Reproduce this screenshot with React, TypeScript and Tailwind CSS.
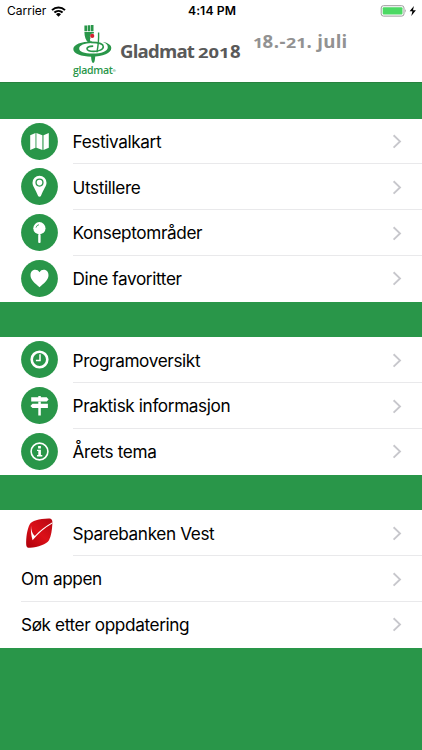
import type { ReactNode } from 'react';

type RowProps = {
  label: string;
  icon?: ReactNode;
  last?: boolean;
};

function Round({ children }: { children: ReactNode }) {
  return (
    <svg viewBox="0 0 37 37" className="h-[37px] w-[37px]" fill="#fff">
      <circle cx="18.5" cy="18.5" r="18.4" fill="#299649" />
      {children}
    </svg>
  );
}

const mapIcon = (
  <Round>
    <path d="M9.2 12.2 L14.5 10.1 V24.7 L9.2 27Z M15.4 10 L21.4 12.2 V26.9 L15.4 24.7Z M22.5 12.2 L27.8 10.1 V24.7 L22.5 27Z" />
  </Round>
);

const markerIcon = (
  <Round>
    <path
      fillRule="evenodd"
      d="M18.5 7.7a7 7 0 0 0-7 7c0 3.2 2.7 6 5.6 13.3.4 1 2.4 1 2.8 0 2.9-7.3 5.6-10.1 5.6-13.3a7 7 0 0 0-7-7Zm0 2.8a4.1 4.1 0 1 1 0 8.2 4.1 4.1 0 0 1 0-8.2Zm0 1.3a2.8 2.8 0 1 0 0 5.6 2.8 2.8 0 0 0 0-5.6Z"
    />
  </Round>
);

const pinIcon = (
  <Round>
    <circle cx="18.4" cy="14.2" r="6.1" />
    <rect x="17.2" y="20" width="2.4" height="9.1" rx="1" />
    <path d="M15 13.6a3.6 3.6 0 0 1 3-2.9" fill="none" stroke="#299649" strokeWidth="0.8" />
  </Round>
);

const heartIcon = (
  <Round>
    <path d="M18.5 27.3C14 23 9.5 20 9.5 15.2c0-6 6.8-7 9-2.9 2.2-4.1 9-3.1 9 2.9 0 4.8-4.5 7.8-9 12.1Z" />
  </Round>
);

const clockIcon = (
  <Round>
    <circle cx="18.5" cy="18.5" r="7.8" fill="none" stroke="#fff" strokeWidth="2.6" />
    <path d="M19 13.3v6.1h-4.1" fill="none" stroke="#fff" strokeWidth="1.5" />
  </Round>
);

const signIcon = (
  <Round>
    <path d="M17.3 8.9h2.5v1.4h5.9l1.9 2.1-1.9 2.2H10.2v-4.3h7.1Z" />
    <path d="M17.3 14.6h2.5v2.1h7.1v4.4h-7.1v7.4h-2.5v-7.4h-5.8l-2.1-2.2 2.1-2.2h5.8Z" />
  </Round>
);

const infoIcon = (
  <Round>
    <circle cx="18.5" cy="18.5" r="8.4" fill="none" stroke="#fff" strokeWidth="1.6" />
    <rect x="17.1" y="13" width="2.8" height="2.5" />
    <path d="M16 16.8h3.9v5.2h1.4v1.4H16V22h1.3v-3.9H16Z" />
  </Round>
);

const bankIcon = (
  <svg viewBox="0 0 37 37" className="h-[37px] w-[37px]">
    <defs>
      <linearGradient id="bank" x1="0.9" y1="0" x2="0.1" y2="1">
        <stop offset="0" stopColor="#b80812" />
        <stop offset="0.5" stopColor="#dc1018" />
        <stop offset="1" stopColor="#b0000b" />
      </linearGradient>
    </defs>
    <path
      d="M5.2 30.5C5 23.5 6 15.5 8.800 10.200C10.600 6.500 18 4.800 27.500 4.400C30.800 4.300 31.600 6 31.400 9.500C31 16 30.200 22 28 26.200C25.600 30.400 17 33 9 33.800C6.300 34 5.300 33 5.200 30.500Z"
      fill="url(#bank)"
    />
    <path
      d="M10 11.500C10.200 16 11 19.500 13.800 22C19 16.500 24.500 12 31.400 8.200L31.300 9.400C23.500 14 17 19.400 11.600 26.200C10.200 22 9.600 16.500 10 11.500Z"
      fill="#fff"
    />
  </svg>
);

function Chevron() {
  return (
    <svg viewBox="0 0 10 16" className="ml-auto mr-5 h-4 w-2.5" fill="none" stroke="#c7c7cc" strokeWidth="1.9">
      <path d="M1.6 2.2 8 8.4l-6.4 6.2" />
    </svg>
  );
}

function Row({ label, icon, last }: RowProps) {
  return (
    <li className="flex h-[45.8px] pl-[21px]">
      {icon && <div className="w-[51.6px] shrink-0 pt-[4px]">{icon}</div>}
      <div className={`flex flex-1 items-center ${last ? 'pb-px' : 'border-b border-[#e9e9eb]'}`}>
        <span className="whitespace-nowrap pt-[1.5px] text-[17.2px] tracking-[-0.38px]">{label}</span>
        <Chevron />
      </div>
    </li>
  );
}

function StatusBar() {
  return (
    <div className="flex h-[22px] items-center text-[12px]">
      <div className="flex flex-1 items-center gap-[5px] pl-[7px]">
        <span className="text-[12px]">Carrier</span>
        <svg viewBox="0 0 15 11" className="h-[11px] w-[15px]" fill="none" stroke="#000" strokeWidth="2">
          <path d="M1 4.1a9.4 9.4 0 0 1 13 0M3.4 6.6a6 6 0 0 1 8.2 0" />
          <path d="M7.5 10.7 5 8.3a3.6 3.6 0 0 1 5 0Z" fill="#000" stroke="none" />
        </svg>
      </div>
      <span className="text-[12.2px] font-semibold tracking-[0.1px]">4:14 PM</span>
      <div className="flex flex-1 items-center justify-end pr-[5px]">
        <svg viewBox="0 0 38 13" className="h-[13px] w-[38px]">
          <rect x="2.2" y="0.7" width="22.8" height="10.4" rx="2.3" fill="none" stroke="#9b9b9b" />
          <rect x="3.7" y="2.2" width="19.8" height="7.4" rx="1" fill="#4cd964" />
          <path d="M26.2 4.1q1.6 1.8 0 3.6Z" fill="#9b9b9b" />
          <path d="m34.9 1-4.3 5.3h2.8l-1.1 4.6 4.6-5.7h-2.9Z" fill="#000" />
        </svg>
      </div>
    </div>
  );
}

function Logo() {
  return (
    <div className="w-[42px] shrink-0 pt-[3px]">
      <svg viewBox="0 0 39 38" className="h-[38px] w-[39px]" fill="#299649">
        <path d="M11.4 .4h2.7v5.800h-2.700ZM14.700 .2h2.600v6h-2.600ZM17.900 0h2.600v6.200h-2.600Z" />
        <path d="M11.400 7h9.500v1.600a3 3 0 0 0-3.400 4.600c-1.400 1.700 0 3 1.500 4.600h-3.600c-2.600-2.500-4-6-4-10.800Z" />
        <circle cx="19.200" cy="10.900" r="2.100" fill="#d3202f" />
        <path d="M24.900 7.400h1.400c.2 7-.4 13.500-1.600 19.800h-1.500c1.400-6.600 1.900-13.200 1.700-19.800Z" />
        <path
          fillRule="evenodd"
          d="M19 16.600C8.300 16.600.3 19.600.3 24.100c0 4.700 7.900 7.600 18.300 7.600C29.800 31.700 38.300 28.300 38.300 23c0-3-3.300-5.100-8.500-5.900 3.600 1.200 5 2.900 5 5.100 0 4.100-6.600 6.400-15 6.400C11.100 28.600 6.200 26.800 6.200 23.600c0-3.200 5.100-5.400 12.800-5.500Z"
        />
        <path
          d="M18 17.400c8 0 12.300 1.500 12.300 4.300 0 2.900-4.600 4.700-9.600 4.700-3.800 0-6.700-.9-6.700-2.600 0-1.500 2.300-2.500 6.200-2.700"
          fill="none"
          stroke="#299649"
          strokeWidth="1.600"
        />
        <path d="M18.100 30.500h4.100c0 3.300-.4 5.900-1.300 7.200h-1.500c-.9-1.600-1.300-3.900-1.300-7.200Z" />
      </svg>
      <div className="whitespace-nowrap font-['Open_Sans',sans-serif] text-[10.5px] font-semibold leading-[14px] tracking-[-0.3px] text-[#299649]">
        gladmat<sup className="text-[4px]">®</sup>
      </div>
    </div>
  );
}

export default function App() {
  return (
    <div className="min-h-[750px] w-[422px] overflow-hidden bg-[#299649] font-[Inter,sans-serif] text-black">
      <header className="h-[83px] border-b border-[#27823f] bg-white">
        <StatusBar />
        <div className="flex items-start pl-[73px] font-['Open_Sans',sans-serif] font-bold">
          <Logo />
          <h1 className="ml-[5px] mt-[15px] flex w-[122px] items-baseline whitespace-nowrap text-[18.6px] leading-[28px] text-[#595959]">
            <span className="w-[78px] tracking-[-0.8px]">Gladmat</span>
            <span className="w-[32px] origin-left scale-x-[1.26] text-[14.6px]">201</span>
            <span>8</span>
          </h1>
          <p className="ml-[11px] mt-[5px] flex items-baseline whitespace-nowrap text-[18.6px] leading-[28px] text-[#929292]">
            <span className="w-[9.500px] origin-left scale-x-[1.2] text-[14.6px]">1</span>
            <span className="tracking-[0.5px]">8.-</span>
            <span className="w-[20.5px] origin-left scale-x-[1.22] text-[14.6px]">21</span>
            <span className="whitespace-pre tracking-[0.3px]">. juli</span>
          </p>
        </div>
      </header>
      <main className="pt-[35.6px]">
        <ul className="bg-white">
          <Row label="Festivalkart" icon={mapIcon} />
          <Row label="Utstillere" icon={markerIcon} />
          <Row label="Konseptområder" icon={pinIcon} />
          <Row label="Dine favoritter" icon={heartIcon} last />
        </ul>
        <ul className="mt-[35.6px] bg-white">
          <Row label="Programoversikt" icon={clockIcon} />
          <Row label="Praktisk informasjon" icon={signIcon} />
          <Row label="Årets tema" icon={infoIcon} last />
        </ul>
        <ul className="mt-[35.6px] bg-white">
          <Row label="Sparebanken Vest" icon={bankIcon} />
          <Row label="Om appen" />
          <Row label="Søk etter oppdatering" last />
        </ul>
      </main>
    </div>
  );
}
